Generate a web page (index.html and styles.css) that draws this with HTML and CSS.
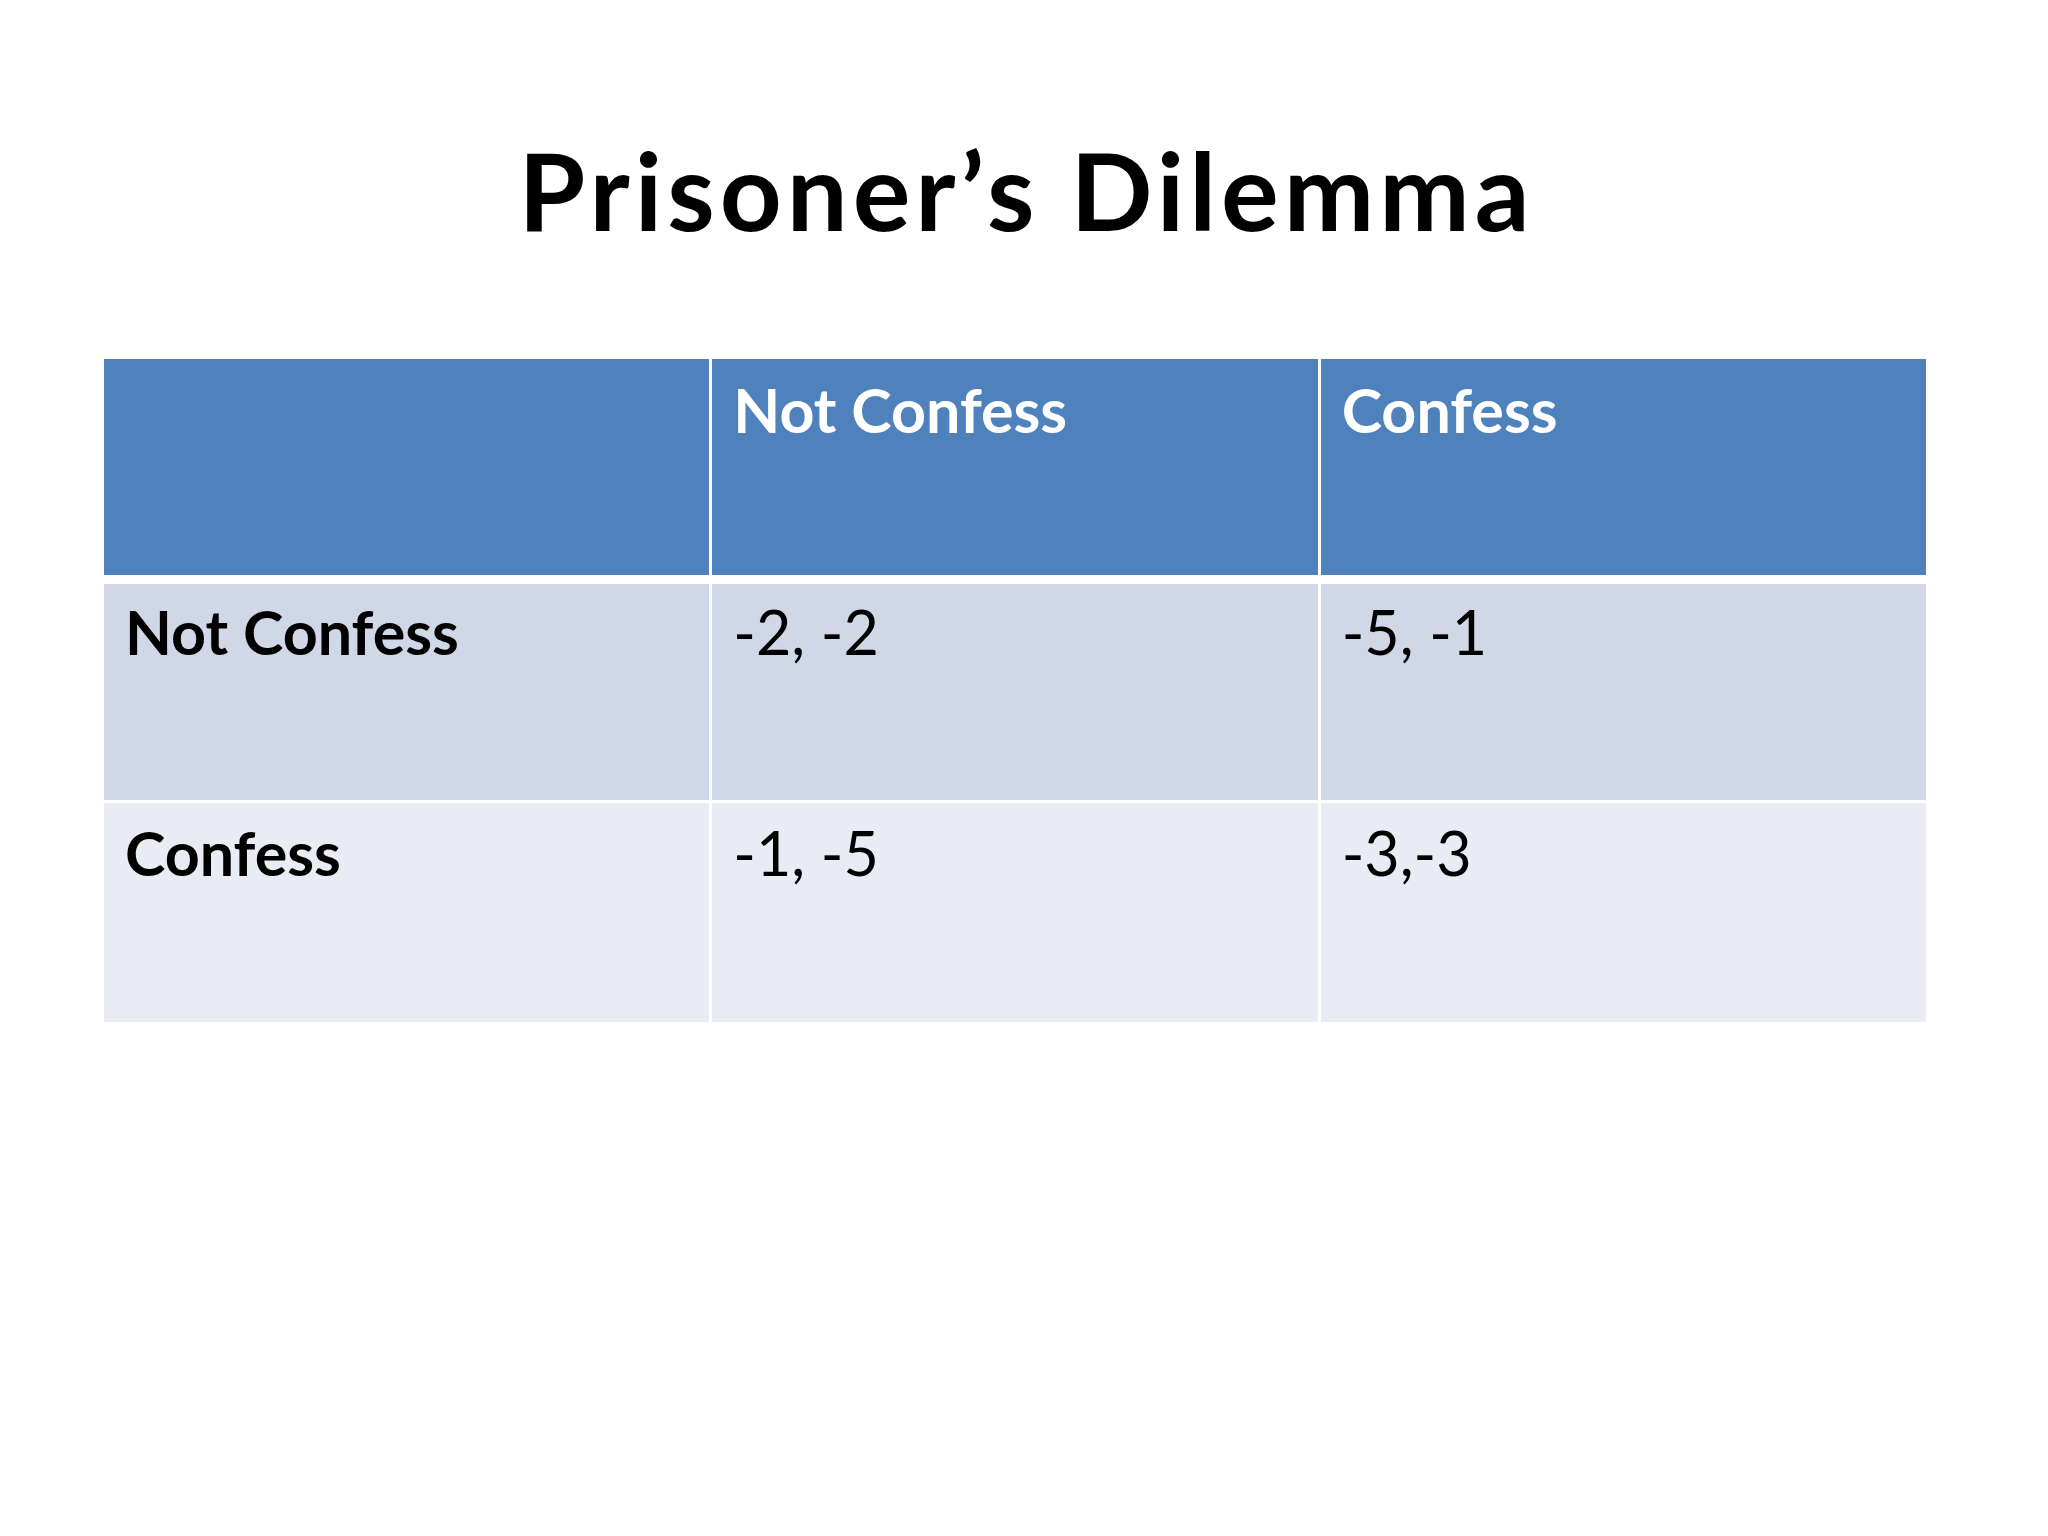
FILE: index.html
```html
<!DOCTYPE html>
<html lang="en">
<head>
<meta charset="utf-8">
<title>Prisoner's Dilemma</title>
<link rel="stylesheet" href="styles.css">
</head>
<body>
<main class="slide">
  <h1 class="title">Prisoner’s Dilemma</h1>
  <div class="matrix">
    <div class="row row-head">
      <div class="cell"></div>
      <div class="cell">Not Confess</div>
      <div class="cell">Confess</div>
    </div>
    <div class="row row-odd">
      <div class="cell cell-label">Not Confess</div>
      <div class="cell">-2, -2</div>
      <div class="cell">-5, -1</div>
    </div>
    <div class="row row-even">
      <div class="cell cell-label">Confess</div>
      <div class="cell">-1, -5</div>
      <div class="cell">-3,-3</div>
    </div>
  </div>
</main>
</body>
</html>
```
FILE: styles.css
```css
html, body {
  margin: 0;
  padding: 0;
  background: #ffffff;
}

.slide {
  width: 2048px;
  height: 1536px;
  box-sizing: border-box;
  padding-top: 135px;
  font-family: Lato, "Open Sans", "Liberation Sans", sans-serif;
  color: #000000;
}

.title {
  margin: 0;
  padding-left: 5px;
  font-size: 108px;
  line-height: 1;
  font-weight: 700;
  letter-spacing: 5px;
  text-align: center;
}

.matrix {
  margin: 116px 0 0 104px;
  width: 1822px;
  display: flex;
  flex-direction: column;
}

.row {
  display: grid;
  grid-template-columns: repeat(3, 1fr);
  column-gap: 3px;
}

.row-head {
  height: 216px;
  color: #ffffff;
  font-weight: 700;
}

.row-head .cell {
  background: #4f81bd;
  padding-top: 20px;
}

.row-odd {
  margin-top: 9px;
  height: 216px;
}

.row-odd .cell {
  background: #d0d8e8;
}

.row-even {
  margin-top: 3px;
  height: 219px;
}

.row-even .cell {
  background: #e9ecf4;
  padding-top: 19px;
}

.cell {
  box-sizing: border-box;
  padding: 17px 0 0 21px;
  font-size: 61px;
  line-height: 1;
}

.cell-label {
  font-weight: 700;
}
```
